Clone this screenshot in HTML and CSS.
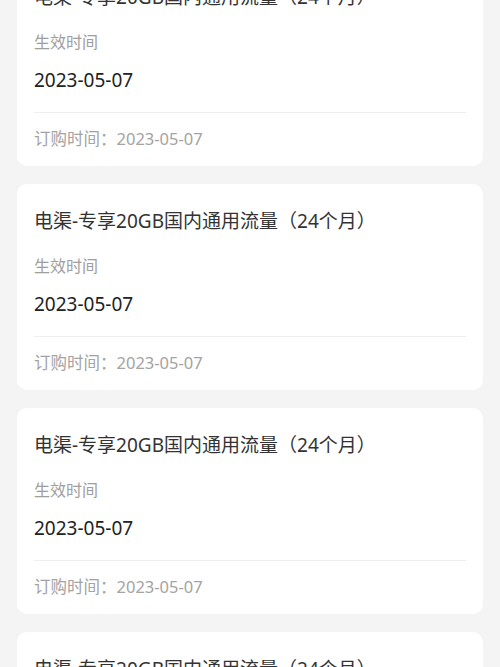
FILE: index.html
```html
<!DOCTYPE html>
<html lang="zh-CN">
<head>
<meta charset="utf-8">
<link rel="stylesheet" href="styles.css">
</head>
<body>
<div class="list">
  <div class="card">
    <div class="title">电渠-专享20GB国内通用流量（24个月）</div>
    <div class="label">生效时间</div>
    <div class="value">2023-05-07</div>
    <div class="divider"></div>
    <div class="footer">订购时间：2023-05-07</div>
  </div>
  <div class="card">
    <div class="title">电渠-专享20GB国内通用流量（24个月）</div>
    <div class="label">生效时间</div>
    <div class="value">2023-05-07</div>
    <div class="divider"></div>
    <div class="footer">订购时间：2023-05-07</div>
  </div>
  <div class="card">
    <div class="title">电渠-专享20GB国内通用流量（24个月）</div>
    <div class="label">生效时间</div>
    <div class="value">2023-05-07</div>
    <div class="divider"></div>
    <div class="footer">订购时间：2023-05-07</div>
  </div>
  <div class="card">
    <div class="title">电渠-专享20GB国内通用流量（24个月）</div>
    <div class="label">生效时间</div>
    <div class="value">2023-05-07</div>
    <div class="divider"></div>
    <div class="footer">订购时间：2023-05-07</div>
  </div>
</div>
</body>
</html>
```
FILE: styles.css
```css
html, body {
  margin: 0;
  padding: 0;
  background: #f4f4f4;
  overflow: hidden;
}
body {
  font-family: "Noto Sans", "Noto Sans CJK SC", sans-serif;
  height: 667px;
}
.list {
  display: flex;
  flex-direction: column;
  gap: 18px;
  padding: 0 17px;
  margin-top: -40px;
}
.card {
  background: #ffffff;
  border-radius: 10px;
  padding: 23px 17px 15px;
  height: 206px;
  box-sizing: border-box;
  display: flex;
  flex-direction: column;
}
.title {
  font-size: 19px;
  line-height: 28px;
  color: #333333;
  white-space: nowrap;
}
.label {
  margin-top: 19px;
  font-size: 16px;
  line-height: 24px;
  color: #9e9e9e;
}
.value {
  margin-top: 12px;
  font-size: 19px;
  line-height: 28px;
  color: #222222;
}
.divider {
  margin-top: 18px;
  height: 1px;
  background: #eeeeee;
}
.footer {
  margin-top: 14px;
  font-size: 16.5px;
  line-height: 24px;
  color: #a3a3a3;
}
```
